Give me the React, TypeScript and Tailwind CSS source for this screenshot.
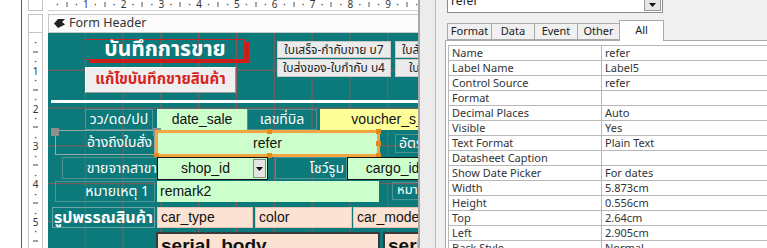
import React from 'react';

const THAI = "font-['Tahoma','Noto_Sans_Thai','Loma','Garuda',sans-serif]";
const LATIN = "font-['Liberation_Sans','Noto_Sans_Thai',sans-serif]";
const UI = "font-['Noto_Sans','Noto_Sans_Thai',sans-serif]";

const props = [
  ['Name', 'refer'],
  ['Label Name', 'Label5'],
  ['Control Source', 'refer'],
  ['Format', ''],
  ['Decimal Places', 'Auto'],
  ['Visible', 'Yes'],
  ['Text Format', 'Plain Text'],
  ['Datasheet Caption', ''],
  ['Show Date Picker', 'For dates'],
  ['Width', '5.873cm'],
  ['Height', '0.556cm'],
  ['Top', '2.64cm'],
  ['Left', '2.905cm'],
  ['Back Style', 'Normal'],
];

const tabs = [
  { name: 'Format', w: 'w-[44px]' },
  { name: 'Data', w: 'w-[43px]' },
  { name: 'Event', w: 'w-[43px]' },
  { name: 'Other', w: 'w-[42px]' },
];

// one centimetre of ruler: dot, tick, dot, number
const HRulerCm = ({ n }: { n: number }) => (
  <div className="flex w-[37.8px] shrink-0 text-[10px] leading-[9px] text-[#333]">
    <div className="flex w-[9.45px] justify-end"><span className="translate-x-1/2">·</span></div>
    <div className="flex w-[9.45px] justify-end"><span className="mt-[2px] h-[5px] w-px translate-x-1/2 bg-[#555]" /></div>
    <div className="flex w-[9.45px] justify-end"><span className="translate-x-1/2">·</span></div>
    <div className="flex w-[9.45px] justify-end"><span className="translate-x-1/2">{n}</span></div>
  </div>
);

const VRulerCm = ({ n }: { n: number }) => (
  <div className="flex h-[37.8px] shrink-0 flex-col text-[10px] leading-[10px] text-[#333]">
    <div className="flex h-[9.45px] shrink-0 items-end justify-center"><span className="translate-y-1/2">·</span></div>
    <div className="flex h-[9.45px] shrink-0 items-end justify-center"><span className="h-px w-[5px] translate-y-1/2 bg-[#444]" /></div>
    <div className="flex h-[9.45px] shrink-0 items-end justify-center"><span className="translate-y-1/2">·</span></div>
    <div className="flex h-[9.45px] shrink-0 items-end justify-center"><span className="translate-y-1/2">{n}</span></div>
  </div>
);

const Handle = ({ className }: { className: string }) => (
  <span className={`absolute h-[5px] w-[5px] bg-[#e38a1e] ${className}`} />
);

const FormCanvas = () => (
  <div className="relative h-full w-[370px] shrink-0 overflow-hidden bg-[#0c7a7a] bg-[linear-gradient(to_right,transparent_36.8px,#8b5a5a_36.8px),linear-gradient(to_bottom,transparent_36.8px,#8b5a5a_36.8px)] bg-[size:37.8px_37.8px]">
    {/* header title + buttons */}
    <div className={`absolute left-[37px] top-[6px] flex h-[21px] w-[160px] items-center justify-center border border-[#d42020] shadow-[4px_3px_0_#cc1c1c] text-[21px] font-bold leading-none text-white ${THAI}`}>
      บันทึกการขาย
    </div>
    <div className={`absolute left-[37px] top-[34px] flex h-[26px] w-[151px] items-center justify-center border border-t-white border-l-white border-r-[#9a9a9a] border-b-[#9a9a9a] bg-[#efefef] text-[15px] font-bold text-[#d8231f] ${THAI}`}>
      แก้ไขบันทึกขายสินค้า
    </div>
    <div className={`absolute left-[229px] top-[8px] flex h-[17px] w-[114px] items-center justify-center border border-[#c9c9c9] bg-[#ebebeb] text-[12px] text-[#222] ${THAI}`}>
      ใบเสร็จ-กำกับขาย บ7
    </div>
    <div className={`absolute left-[229px] top-[26px] flex h-[18px] w-[114px] items-center justify-center border border-[#c9c9c9] bg-[#ebebeb] text-[12px] text-[#222] ${THAI}`}>
      ใบส่งของ-ใบกำกับ บ4
    </div>
    <div className={`absolute left-[347px] top-[8px] flex h-[17px] w-[100px] items-center whitespace-nowrap border border-[#c9c9c9] bg-[#ebebeb] pl-[6px] text-[12px] text-[#222] ${THAI}`}>
      ใบสั่งซื้อ บ3
    </div>
    <div className={`absolute left-[347px] top-[26px] flex h-[18px] w-[100px] items-center whitespace-nowrap border border-[#c9c9c9] bg-[#ebebeb] pl-[13px] text-[12px] text-[#222] ${THAI}`}>
      ใบรับเงิน บ5
    </div>
    <div className="absolute left-[3px] right-0 top-[67px] h-[3px] bg-white" />

    {/* row 1 */}
    <div className={`absolute left-[37px] top-[76px] flex h-[21px] w-[68px] items-center justify-center border border-[#4f9494] text-[14px] text-white ${THAI}`}>วว/ดด/ปป</div>
    <div className={`absolute left-[109px] top-[76px] flex h-[21px] w-[90px] items-center justify-center bg-[#ccffcc] text-[14px] text-[#111] ${LATIN}`}>date_sale</div>
    <div className={`absolute left-[199px] top-[76px] flex h-[21px] w-[70px] items-center justify-center border border-[#4f9494] text-[14px] text-white ${THAI}`}>เลขที่บิล</div>
    <div className={`absolute left-[272px] top-[76px] flex h-[21px] w-[146px] items-center justify-center bg-[#ffff99] text-[14px] text-[#111] ${LATIN}`}>voucher_s_id</div>

    {/* row 2 (selected) */}
    <div className={`absolute left-[7px] top-[97px] flex h-[25px] w-[100px] items-center justify-end overflow-hidden whitespace-nowrap border border-[#9aa8a8] pr-[2px] text-[14px] text-white ${THAI}`}>อ้างถึงใบสั่ง</div>
    <span className="absolute left-[3px] top-[95px] h-[8px] w-[8px] bg-[#8e8e8e]" />
    <span className="absolute left-[105px] top-[95px] h-[8px] w-[8px] bg-[#8e8e8e]" />
    <div className={`absolute left-[107px] top-[97px] flex h-[27px] w-[225px] items-center justify-center border-[3px] border-[#f2a640] bg-[#ccffcc] text-[14px] text-[#111] ${LATIN}`}>
      refer
      <Handle className="-top-[4px] left-[109px]" />
      <Handle className="-right-[4px] -top-[4px]" />
      <Handle className="-right-[4px] top-[8px]" />
      <Handle className="-bottom-[4px] -right-[4px]" />
      <Handle className="-bottom-[4px] left-[109px]" />
      <Handle className="-bottom-[4px] -left-[4px]" />
    </div>
    <div className={`absolute left-[347px] top-[101px] flex h-[19px] w-[80px] items-center whitespace-nowrap border border-[#4f9494] pl-[3px] text-[14px] text-white ${THAI}`}>อัตราภาษี</div>

    {/* row 3 */}
    <div className={`absolute left-[14px] top-[124px] flex h-[22px] w-[96px] items-center justify-end overflow-hidden whitespace-nowrap border border-[#4f9494] text-[14px] text-white ${THAI}`}>ขายจากสาขา</div>
    <div className={`absolute left-[109px] top-[124px] flex h-[23px] w-[111px] border border-[#111] bg-[#ccffcc] text-[14px] text-[#111] ${LATIN}`}>
      <div className="flex flex-1 items-center justify-center">shop_id</div>
      <div className="my-[1px] mr-[1px] flex w-[13px] items-center justify-center border border-[#8a8a8a] bg-[#e4e4e4]">
        <svg width="7" height="4" viewBox="0 0 7 4"><path d="M0 0h7L3.5 4z" fill="#111" /></svg>
      </div>
    </div>
    <div className={`absolute left-[227px] top-[124px] flex h-[22px] w-[72px] items-center justify-end border border-[#4f9494] pr-[2px] text-[14px] text-white ${THAI}`}>โชว์รูม</div>
    <div className={`absolute left-[299px] top-[124px] flex h-[23px] w-[91px] items-center justify-center border border-[#111] bg-[#ccffcc] text-[14px] text-[#111] ${LATIN}`}>cargo_id</div>

    {/* row 4 */}
    <div className={`absolute left-[7px] top-[148px] flex h-[21px] w-[100px] items-center justify-end whitespace-nowrap border border-[#4f9494] pr-[5px] text-[14px] text-white ${THAI}`}>หมายเหตุ 1</div>
    <div className={`absolute left-[109px] top-[148px] flex h-[21px] w-[222px] items-center bg-[#ccffcc] pl-[3px] text-[14px] text-[#111] ${LATIN}`}>remark2</div>
    <div className={`absolute left-[344px] top-[149px] flex h-[18px] w-[80px] items-center whitespace-nowrap border border-[#4f9494] pl-[4px] text-[13px] text-white ${THAI}`}>หมายเหตุ 2</div>

    {/* row 5 */}
    <div className={`absolute left-[4px] top-[174px] flex h-[21px] w-[103px] items-center justify-center whitespace-nowrap border border-[#6aa6a6] text-[16px] font-bold text-white ${THAI}`}>รูปพรรณสินค้า</div>
    <div className={`absolute left-[109px] top-[174px] flex h-[21px] w-[96px] items-center border border-[#e2c6b4] bg-[#fbe2d2] pl-[3px] text-[14px] text-[#111] ${LATIN}`}>car_type</div>
    <div className={`absolute left-[207px] top-[174px] flex h-[21px] w-[97px] items-center border border-[#e2c6b4] bg-[#fbe2d2] pl-[3px] text-[14px] text-[#111] ${LATIN}`}>color</div>
    <div className={`absolute left-[305px] top-[174px] flex h-[21px] w-[120px] items-center border border-[#e2c6b4] bg-[#fbe2d2] pl-[3px] text-[14px] text-[#111] ${LATIN}`}>car_model</div>

    {/* row 6 */}
    <div className={`absolute left-[108px] top-[199px] h-[30px] w-[224px] border-2 border-[#3a3a3a] bg-[#fbe2d2] pl-[3px] pt-[1px] text-[19px] font-bold leading-[22px] text-[#111] ${LATIN}`}>serial_body</div>
    <div className={`absolute left-[335px] top-[199px] h-[30px] w-[100px] border-2 border-[#3a3a3a] bg-[#fbe2d2] pl-[3px] pt-[1px] text-[19px] font-bold leading-[22px] text-[#111] ${LATIN}`}>serial_engine</div>
  </div>
);

const Designer = () => (
  <div className="flex h-full w-[396px] shrink-0 flex-col bg-white">
    <div className="flex h-[11px] shrink-0">
      <div className="w-[6px]" />
      <div className="w-[15px] border-x border-b border-[#c4c4c4]" />
      <div className="w-[5px]" />
      <div className="flex w-[370px] overflow-hidden border-b border-[#d0d0d0]">
        {[1, 2, 3, 4, 5, 6, 7, 8, 9, 10].map((n) => (
          <HRulerCm key={n} n={n} />
        ))}
      </div>
    </div>
    <div className="h-[3px] shrink-0" />
    <div className="flex h-[19px] shrink-0">
      <div className="w-[6px]" />
      <div className="w-[15px] border border-[#c4c4c4]" />
      <div className="w-[5px]" />
      <div className={`flex w-[370px] items-center gap-[4px] border-y border-l border-[#c8c8c8] bg-[#fbfbfb] pl-[5px] text-[12.5px] text-[#333] ${UI}`}>
        <svg width="11" height="9" viewBox="0 0 11 9">
          <path d="M0 4.5 4 0h7L8 3l3 2.5L4 9z" fill="#222" />
        </svg>
        Form Header
      </div>
    </div>
    <div className="flex min-h-0 flex-1">
      <div className="w-[6px]" />
      <div className="flex w-[15px] flex-col overflow-hidden border-x border-[#c4c4c4]">
        {[1, 2, 3, 4, 5, 6].map((n) => (
          <VRulerCm key={n} n={n} />
        ))}
      </div>
      <div className="w-[5px]" />
      <FormCanvas />
    </div>
  </div>
);

const PropertySheet = () => (
  <div className={`flex h-full w-[331px] shrink-0 flex-col overflow-hidden bg-[#f0f0f0] ${UI}`}>
    <div className="-mt-[8px] ml-[11px] flex h-[21px] w-[216px] shrink-0 border border-[#8c8c8c] bg-white">
      <div className="flex-1 pl-[3px] text-[12px] leading-[16px] text-[#222]">refer</div>
      <div className="mb-[1px] mr-[1px] flex w-[17px] items-end justify-center border border-[#9a9a9a] bg-[#e8e8e8] pb-[3px]">
        <svg width="7" height="4" viewBox="0 0 7 4"><path d="M0 0h7L3.5 4z" fill="#111" /></svg>
      </div>
    </div>
    <div className="ml-[11px] mt-[6px] flex h-[21px] shrink-0 items-end">
      {tabs.map((t) => (
        <div
          key={t.name}
          className={`flex h-[17px] ${t.w} items-center justify-center border-y border-l border-[#a9a9a9] bg-[#f0f0f0] text-[11px] text-[#222]`}
        >
          {t.name}
        </div>
      ))}
      <div className="relative z-10 -mb-px flex h-[21px] w-[45px] items-start justify-center border-x border-t border-[#a9a9a9] bg-white pt-[1px] text-[11px] text-[#222]">
        All
      </div>
    </div>
    <div className="ml-[9px] flex-1 border-l border-t border-[#a9a9a9] bg-white pl-[2px] pt-[4px]">
      <div className="border-l border-t border-[#b8b8b8]">
        {props.map(([k, v]) => (
          <div key={k} className="flex h-[15px] border-b border-[#b8b8b8] text-[11px] leading-[14px] text-[#333]">
            <div className="w-[153px] border-r border-[#b8b8b8] pl-[3px]">{k}</div>
            <div className="flex-1 pl-[3px]">{v}</div>
          </div>
        ))}
      </div>
    </div>
  </div>
);

export default function App() {
  return (
    <div className="flex h-[248px] w-[767px] overflow-hidden bg-white">
      <div className="w-[22px] shrink-0 border-r border-[#a03c3c] bg-white" />
      <Designer />
      <div className="w-[18px] shrink-0 border-l-2 border-r border-l-[#a8a8a8] border-r-[#bcbcbc] bg-[#ececec]" />
      <PropertySheet />
    </div>
  );
}
